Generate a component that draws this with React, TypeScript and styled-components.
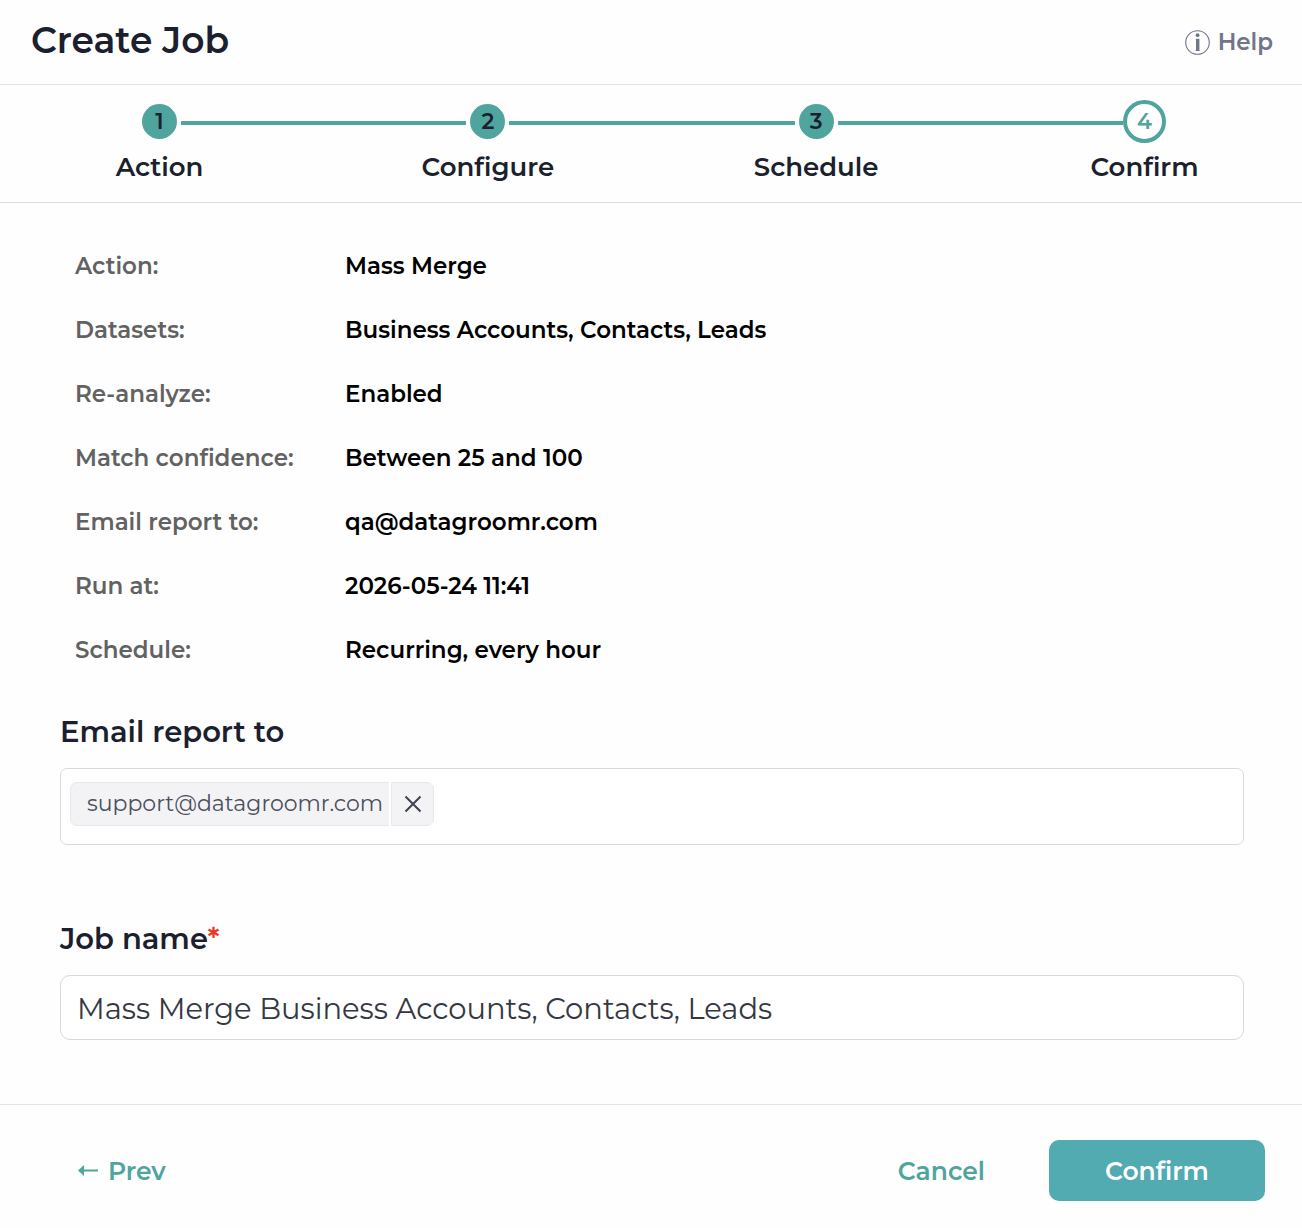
import React, { useState } from "react";
import styled, { createGlobalStyle } from "styled-components";

const teal = "#4fa59d";
const ink = "#1b1f2e";

const GlobalStyle = createGlobalStyle`
  * { box-sizing: border-box; }
  body { margin: 0; background: #fefefe; }
  body, button, input { font-family: Montserrat, Inter, "Liberation Sans", sans-serif; }
`;

const Dialog = styled.main`
  display: flex;
  flex-direction: column;
  min-height: 100vh;
  color: ${ink};
`;

const Header = styled.header`
  display: flex;
  align-items: center;
  justify-content: space-between;
  height: 85px;
  padding: 0 29px 4px 31px;
  border-bottom: 1px solid #e2e3ea;
`;

const Title = styled.h1`
  margin: 0;
  font-size: 36px;
  line-height: 48px;
  font-weight: 600;
`;

const HelpLink = styled.a`
  display: flex;
  align-items: center;
  gap: 8px;
  margin-top: 4px;
  color: #70758a;
  font-size: 23px;
  line-height: 32px;
  font-weight: 600;
  text-decoration: none;
`;

const Stepper = styled.ol`
  display: flex;
  margin: 0;
  padding: 15px 136px 19px 138px;
  list-style: none;
  border-bottom: 1px solid #dcdcde;
`;

const Step = styled.li`
  display: flex;
  flex-direction: column;
  align-items: center;
  gap: 8px;
  width: 43px;
`;

const StepMarker = styled.span<{ $current: boolean }>`
  display: flex;
  align-items: center;
  justify-content: center;
  flex: none;
  width: 43px;
  height: 43px;
  border: 4px solid ${(p) => (p.$current ? teal : "transparent")};
  border-radius: 50%;
  background: ${(p) => (p.$current ? "#fff" : teal)};
  background-clip: padding-box;
  color: ${(p) => (p.$current ? teal : ink)};
  font-size: 22px;
  font-weight: 600;
`;

const StepLabel = styled.span`
  font-size: 26px;
  line-height: 32px;
  font-weight: 600;
  white-space: nowrap;
`;

const Connector = styled.li`
  flex: 1;
  height: 4px;
  margin-top: 21px;
  background: ${teal};
`;

const Content = styled.div`
  flex: 1;
  padding: 31px 58px 64px 60px;
`;

const Summary = styled.dl`
  margin: 0 0 30px;
  padding-left: 15px;
`;

const SummaryRow = styled.div`
  display: grid;
  grid-template-columns: 270px 1fr;
  font-size: 23px;
  line-height: 64px;
  font-weight: 600;
`;

const Term = styled.dt`
  color: #626262;
`;

const Detail = styled.dd`
  margin: 0;
  color: #000;
`;

const Field = styled.div`
  display: flex;
  flex-direction: column;
  gap: 16px;
  & + & { margin-top: 74px; }
`;

const FieldLabel = styled.label`
  font-size: 29px;
  line-height: 40px;
  font-weight: 600;
`;

const Required = styled.span`
  color: #ee3524;
`;

const TagBox = styled.div`
  display: flex;
  align-items: flex-start;
  gap: 12px;
  height: 77px;
  padding: 13px 9px;
  border: 1px solid #d9d9dd;
  border-radius: 7px;
  background: #fff;
`;

const Tag = styled.span`
  display: flex;
  gap: 2px;
  color: #4b4f5e;
  font-size: 22px;
  line-height: 42px;
`;

const TagText = styled.span`
  padding: 0 6px 0 16px;
  border: 1px solid #e8e8ee;
  border-right: 0;
  border-radius: 7px 0 0 7px;
  background: #f3f3f6;
`;

const TagRemove = styled.button`
  display: flex;
  align-items: center;
  justify-content: center;
  width: 43px;
  height: 44px;
  padding: 0;
  border: 1px solid #e8e8ee;
  border-radius: 0 7px 7px 0;
  background: #f3f3f6;
  color: #3d4152;
  cursor: pointer;
`;

const TagInput = styled.input`
  flex: 1;
  min-width: 0;
  height: 44px;
  border: 0;
  outline: 0;
  background: transparent;
  font-size: 22px;
`;

const TextInput = styled.input`
  width: 100%;
  height: 65px;
  padding: 1px 16px 0;
  border: 1px solid #d7d8de;
  border-radius: 10px;
  background: #fff;
  color: #343842;
  font-size: 29px;
`;

const Footer = styled.footer`
  display: flex;
  align-items: center;
  padding: 35px 37px 27px 78px;
  border-top: 1px solid #e2e3ea;
`;

const Actions = styled.div`
  display: flex;
  align-items: center;
  gap: 64px;
  margin-left: auto;
`;

const TextButton = styled.button`
  display: flex;
  align-items: center;
  gap: 10px;
  padding: 0;
  border: 0;
  background: none;
  color: ${teal};
  font-size: 25px;
  line-height: 32px;
  font-weight: 600;
  cursor: pointer;
`;

const PrimaryButton = styled.button`
  width: 216px;
  height: 61px;
  border: 0;
  border-radius: 10px;
  background: #51abb1;
  color: #fff;
  font-size: 25px;
  font-weight: 600;
  cursor: pointer;
`;

const InfoIcon = () => (
  <svg width="25" height="25" viewBox="0 0 25 25" aria-hidden="true">
    <circle cx="12.5" cy="12.5" r="11.8" fill="none" stroke="currentColor" strokeWidth="1.1" />
    <circle cx="12.6" cy="5.2" r="1.9" fill="currentColor" />
    <path d="M10.8 8.8h3.6V20h.3v.9h-4V20h.3V9.7h-.2z" fill="currentColor" />
  </svg>
);

const CloseIcon = () => (
  <svg width="18" height="18" viewBox="0 0 18 18" aria-hidden="true">
    <path d="M1.5 1.5l15 15M16.5 1.5l-15 15" stroke="currentColor" strokeWidth="2" />
  </svg>
);

const ArrowLeftIcon = () => (
  <svg width="20" height="12" viewBox="0 0 20 12" aria-hidden="true">
    <path d="M0 5.5L6 0v4.5h14v2H6V11z" fill="currentColor" />
  </svg>
);

const steps = ["Action", "Configure", "Schedule", "Confirm"];
const currentStep = 3;

const summary = [
  ["Action:", "Mass Merge"],
  ["Datasets:", "Business Accounts, Contacts, Leads"],
  ["Re-analyze:", "Enabled"],
  ["Match confidence:", "Between 25 and 100"],
  ["Email report to:", "qa@datagroomr.com"],
  ["Run at:", "2026-05-24 11:41"],
  ["Schedule:", "Recurring, every hour"],
];

export default function App() {
  const [emails, setEmails] = useState(["support@datagroomr.com"]);
  const [jobName, setJobName] = useState("Mass Merge Business Accounts, Contacts, Leads");

  return (
    <Dialog>
      <GlobalStyle />
      <Header>
        <Title>Create Job</Title>
        <HelpLink href="#help">
          <InfoIcon />
          Help
        </HelpLink>
      </Header>
      <Stepper>
        {steps.map((name, i) => (
          <React.Fragment key={name}>
            {i > 0 && <Connector aria-hidden="true" />}
            <Step aria-current={i === currentStep ? "step" : undefined}>
              <StepMarker $current={i === currentStep}>{i + 1}</StepMarker>
              <StepLabel>{name}</StepLabel>
            </Step>
          </React.Fragment>
        ))}
      </Stepper>
      <Content>
        <Summary>
          {summary.map(([term, detail]) => (
            <SummaryRow key={term}>
              <Term>{term}</Term>
              <Detail>{detail}</Detail>
            </SummaryRow>
          ))}
        </Summary>
        <Field>
          <FieldLabel htmlFor="emails">Email report to</FieldLabel>
          <TagBox>
            {emails.map((email) => (
              <Tag key={email}>
                <TagText>{email}</TagText>
                <TagRemove
                  type="button"
                  aria-label="Remove"
                  onClick={() => setEmails(emails.filter((e) => e !== email))}
                >
                  <CloseIcon />
                </TagRemove>
              </Tag>
            ))}
            <TagInput id="emails" type="email" />
          </TagBox>
        </Field>
        <Field>
          <FieldLabel htmlFor="job-name">
            Job name<Required>*</Required>
          </FieldLabel>
          <TextInput id="job-name" value={jobName} onChange={(e) => setJobName(e.target.value)} />
        </Field>
      </Content>
      <Footer>
        <TextButton type="button">
          <ArrowLeftIcon />
          Prev
        </TextButton>
        <Actions>
          <TextButton type="button">Cancel</TextButton>
          <PrimaryButton type="submit">Confirm</PrimaryButton>
        </Actions>
      </Footer>
    </Dialog>
  );
}
